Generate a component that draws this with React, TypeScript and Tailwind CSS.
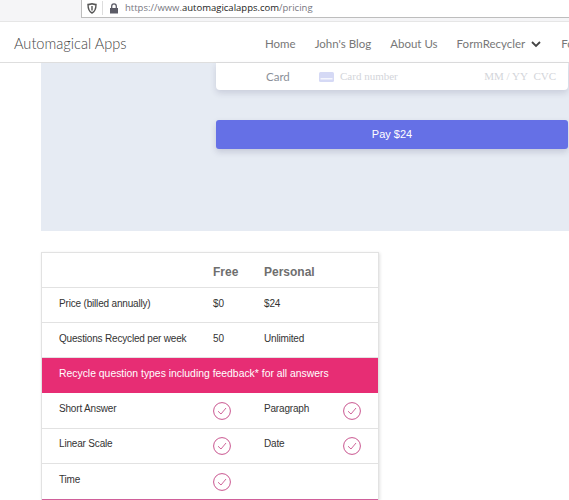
import React from "react";

const Check = () => (
  <svg width="18" height="18" viewBox="0 0 18 18" fill="none" className="text-[#c9558f]" stroke="currentColor">
    <circle cx="9" cy="9" r="8.4" strokeWidth="1" />
    <path d="M5 9.2 L8 12 L13 6" strokeWidth="0.9" />
  </svg>
);

const Row = ({ a, b, c, d, textTop, iconTop, tall, last }: { a: string; b?: string; c?: string; d?: boolean; textTop: string; iconTop: string; tall?: boolean; last?: boolean }) => (
  <div className={`flex ${tall ? "h-[36px]" : "h-[35px]"} border-b ${last ? "border-[#d0609a]" : "border-[#e2e2e2]"} text-[10px] tracking-[-0.18px] text-[#333] pl-[17px]`}>
    <div className={`w-[154px] ${textTop}`}>{a}</div>
    <div className={`w-[51px] ${b ? textTop : iconTop}`}>{b ? b : <Check />}</div>
    <div className={`w-[79px] ${textTop}`}>{c}</div>
    {d && <div className={iconTop}><Check /></div>}
  </div>
);

export default function App() {
  return (
    <div className="h-[500px] w-[569px] overflow-hidden bg-white font-['Liberation_Sans',sans-serif]">
      <div className="h-[22px] bg-[#f5f5f7] border-b border-[#e6e6e6]">
        <div className="ml-[81px] h-[18px] bg-white border-l border-b border-[#bdbdbd] flex items-center pl-[5px] pb-[1px]">
          <svg width="10" height="11" viewBox="0 0 10 11" fill="none" stroke="#555" strokeWidth="1.4">
            <path d="M1 1.5 C3 1.5 4 1 5 0.8 C6 1 7 1.5 9 1.5 C9 6 8 8.5 5 10 C2 8.5 1 6 1 1.5 Z" />
            <path d="M5 3 V7.5" />
          </svg>
          <div className="ml-[5px] mr-[6px] h-[14px] w-px bg-[#ddd]" />
          <svg width="10" height="11" viewBox="0 0 10 11" fill="#5b5b66">
            <path d="M1 5 H9 V10.5 H1 Z" />
            <path d="M2.7 5 V3.2 A2.3 2.3 0 0 1 7.3 3.2 V5" fill="none" stroke="#5b5b66" strokeWidth="1.3" />
          </svg>
          <div className="ml-[6px] text-[9.5px] font-['Open_Sans',sans-serif] text-[#77777f] whitespace-nowrap">
            https://www.<span className="text-[#1c1c22]">automagicalapps.com</span>/pricing
          </div>
        </div>
      </div>

      <nav className="h-[41px] bg-white border-b border-[#dedede] flex items-center pl-[14px] pt-[3px] font-['Lato',sans-serif] overflow-hidden whitespace-nowrap">
        <div className="text-[14.6px] font-light text-[#444] w-[251px] shrink-0">Automagical Apps</div>
        <div className="flex items-center gap-[19px] text-[11.5px] text-[#777] font-normal shrink-0">
          <span>Home</span>
          <span>John's Blog</span>
          <span>About Us</span>
          <span className="flex items-center gap-[6px]">
            FormRecycler
            <svg width="10" height="8" viewBox="0 0 10 8" fill="none" stroke="#444" strokeWidth="1.8">
              <path d="M1 2 L5 6 L9 2" />
            </svg>
          </span>
          <span className="ml-px">Form</span>
        </div>
      </nav>

      <div className="pl-[41px]">
        <div className="h-[168px] bg-[#e6ebf3] pl-[175px] pr-px">
          <div className="h-[27px] bg-white rounded-b-[4px] shadow-[0_3px_6px_rgba(50,50,93,0.16)] flex items-center pl-[50px] pr-[12px]">
            <span className="w-[53px] text-[11.5px] text-[#8a8f98] font-['Lato',sans-serif]">Card</span>
            <svg width="15" height="10" viewBox="0 0 15 10" className="mr-[6px]">
              <rect width="15" height="10" rx="1.5" fill="#d5d9f5" />
              <rect x="1.5" y="6" width="12" height="1.5" fill="#f5f6fd" />
            </svg>
            <span className="text-[11px] text-[#d3d5da] font-['Liberation_Serif',serif]">Card number</span>
            <span className="ml-auto text-[11px] text-[#d3d5da] font-['Liberation_Serif',serif] whitespace-nowrap">MM / YY&nbsp;&nbsp;CVC</span>
          </div>
          <div className="mt-[30px] h-[29px] bg-[#6570e6] rounded-[3px] shadow-[0_3px_6px_rgba(50,50,93,0.18)] text-white text-[11px] flex items-center justify-center">
            Pay $24
          </div>
        </div>

        <div className="mt-[21px] w-[338px] border border-[#e2e2e2] border-b-0 shadow-[1px_1px_3px_rgba(0,0,0,0.12)]">
          <div className="h-[35px] flex items-center border-b border-[#e2e2e2] pl-[171px] pt-[4px] text-[12px] font-bold text-[#6e6e6e]">
            <span className="w-[51px]">Free</span>
            <span>Personal</span>
          </div>
          <Row a="Price (billed annually)" b="$0" c="$24" textTop="pt-[8px]" iconTop="pt-[8px]" />
          <Row a="Questions Recycled per week" b="50" c="Unlimited" textTop="pt-[8px]" iconTop="pt-[8px]" />
          <div className="h-[35px] bg-[#e72d74] text-white text-[10.4px] flex items-center pl-[17px] pb-[3px]">
            Recycle question types including feedback* for all answers
          </div>
          <Row a="Short Answer" c="Paragraph" d tall textTop="pt-[8px]" iconTop="pt-[9px]" />
          <Row a="Linear Scale" c="Date" d textTop="pt-[7px]" iconTop="pt-[8px]" />
          <Row a="Time" tall last textTop="pt-[8px]" iconTop="pt-[9px]" />
        </div>
      </div>
    </div>
  );
}
